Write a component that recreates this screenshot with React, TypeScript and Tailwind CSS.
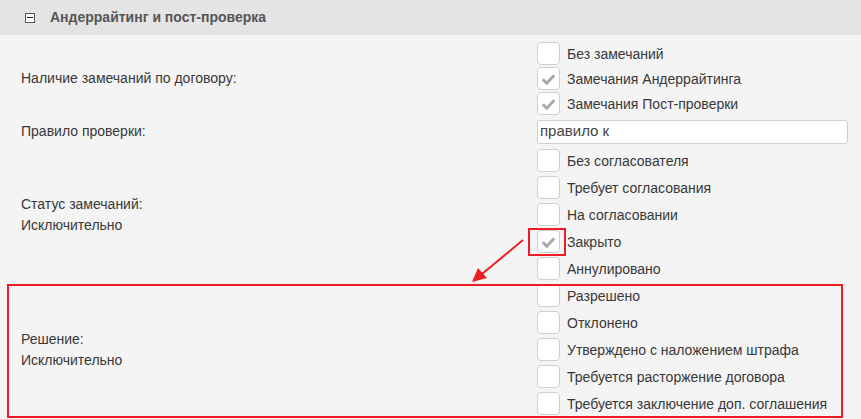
import React from "react";

const Check = ({ checked }: { checked?: boolean }) => (
  <div className="w-[23px] h-[23px] rounded-[4px] border border-[#cfcfcf] bg-white flex items-center justify-center shrink-0">
    {checked && (
      <svg width="15" height="12" viewBox="0 0 15 12">
        <path d="M1.8 6.3 L5.8 10.2 L13.2 2.3" fill="none" stroke="#a9a9a9" strokeWidth="3" strokeLinejoin="miter" />
      </svg>
    )}
  </div>
);

const Item = ({ label, checked, h }: { label: string; checked?: boolean; h: string }) => (
  <div className={`flex items-center gap-[7px] ${h}`}>
    <Check checked={checked} />
    <span className="pt-[2px]">{label}</span>
  </div>
);

export default function App() {
  return (
    <div className="relative w-[861px] h-[419px] bg-[#f4f4f4] text-[14px] text-[#383838] overflow-hidden" style={{ fontFamily: '"Liberation Sans", Arial, sans-serif' }}>
      <div className="h-[35px] bg-[#e4e4e4] flex items-center pl-[25px]">
        <div className="w-[10px] h-[10px] border border-[#555] bg-white flex items-center justify-center">
          <div className="w-[6px] h-[1px] bg-[#222]" />
        </div>
        <span className="ml-[15px] font-bold text-[#555]">Андеррайтинг и пост-проверка</span>
      </div>
      <div className="pt-[6px] grid grid-cols-[537px_1fr]">
        <div className="flex items-center pl-[21px]">Наличие замечаний по договору:</div>
        <div>
          <Item h="h-[25px]" label="Без замечаний" />
          <Item h="h-[25px]" label="Замечания Андеррайтинга" checked />
          <Item h="h-[25px]" label="Замечания Пост-проверки" checked />
        </div>
        <div className="flex items-center pl-[21px]">Правило проверки:</div>
        <div className="h-[31px] flex items-center">
          <div className="w-[311px] h-[24px] rounded-[3px] border border-[#cfcfcf] bg-white flex items-center pl-[2px] text-[15px] text-[#444]">правило к</div>
        </div>
        <div className="flex flex-col justify-center pl-[21px] leading-[21px]">
          <div>Статус замечаний:</div>
          <div>Исключительно</div>
        </div>
        <div>
          <Item h="h-[27px]" label="Без согласователя" />
          <Item h="h-[27px]" label="Требует согласования" />
          <Item h="h-[27px]" label="На согласовании" />
          <Item h="h-[27px]" label="Закрыто" checked />
          <Item h="h-[27px]" label="Аннулировано" />
        </div>
        <div className="flex flex-col justify-center pl-[21px] leading-[21px]">
          <div>Решение:</div>
          <div>Исключительно</div>
        </div>
        <div>
          <Item h="h-[27px]" label="Разрешено" />
          <Item h="h-[27px]" label="Отклонено" />
          <Item h="h-[27px]" label="Утверждено с наложением штрафа" />
          <Item h="h-[27px]" label="Требуется расторжение договора" />
          <Item h="h-[27px]" label="Требуется заключение доп. соглашения" />
        </div>
      </div>
      <div className="absolute left-[7px] top-[284px] w-[836px] h-[134px] border-2 border-[#ee1c25]" />
      <div className="absolute left-[528px] top-[228px] w-[38px] h-[28px] border-2 border-[#ee1c25]" />
      <svg className="absolute left-0 top-0" width="861" height="419">
        <line x1="523" y1="240" x2="482" y2="274" stroke="#ee1c25" strokeWidth="2" />
        <polygon points="472,282 478,268 487,278" fill="#ee1c25" />
      </svg>
    </div>
  );
}
